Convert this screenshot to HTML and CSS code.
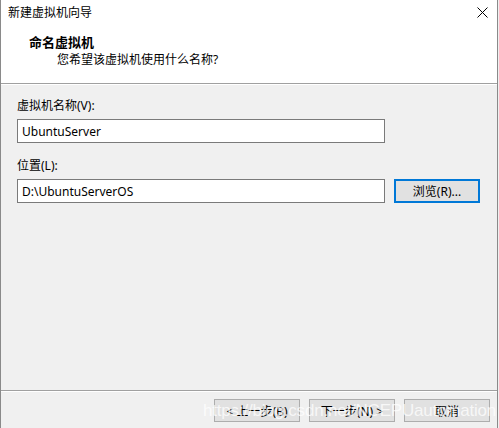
FILE: index.html
```html
<!DOCTYPE html>
<html>
<head>
    <title>新建虚拟机向导</title>
    <meta charset="UTF-8">
    <link rel="stylesheet" href="styles.css">
</head>
<body>
    <div class="window">
        <!-- 顶部白色区域 -->
        <div class="header">
            <div class="title-bar">
                <span class="title">新建虚拟机向导</span>
                <svg class="close" width="11" height="11" viewBox="0 0 11 11">
                    <path d="M0.5 0.5 L10.5 10.5 M10.5 0.5 L0.5 10.5" stroke="#000" stroke-width="1"/>
                </svg>
            </div>
            <div class="heading">命名虚拟机</div>
            <div class="subheading">您希望该虚拟机使用什么名称?</div>
        </div>

        <div class="content">
            <label class="field-label" for="vmname">虚拟机名称(V):</label>
            <div class="row">
                <input type="text" id="vmname" class="text-box" value="UbuntuServer">
            </div>
            <label class="field-label second" for="location">位置(L):</label>
            <div class="row">
                <input type="text" id="location" class="text-box" value="D:\UbuntuServerOS">
                <button class="btn btn-focus">浏览(R)...</button>
            </div>
        </div>

        <div class="footer">
            <button class="btn">&lt; 上一步(B)</button>
            <button class="btn">下一步(N) &gt;</button>
            <button class="btn">取消</button>
            <span class="watermark">https://blog.csdn.net/NCEPUautomation</span>
        </div>
    </div>
</body>
</html>
```

FILE: styles.css
```css
html, body {
    margin: 0;
    padding: 0;
}

body {
    background-color: #f0f0f0;
    font-family: "Noto Sans", "Noto Sans CJK SC", sans-serif;
    font-size: 12px;
    color: #000;
}

.window {
    width: 496px;
    height: 428px;
    border-left: 1px solid #8a8a8a;
    border-right: 1px solid #8a8a8a;
    display: flex;
    flex-direction: column;
    position: relative;
}

.header {
    height: 84px;
    background-color: #fff;
    border-bottom: 1px solid #a0a0a0;
    box-sizing: border-box;
}

.title-bar {
    display: flex;
    justify-content: space-between;
    align-items: center;
    height: 24px;
    padding: 0 9px 0 7px;
}

.title {
    font-size: 12px;
}

.heading {
    margin-top: 10px;
    padding-left: 28px;
    font-weight: bold;
    font-size: 13px;
    line-height: 17px;
}

.subheading {
    padding-left: 56px;
    line-height: 17px;
}

.content {
    flex: 1;
    padding: 12px 0 0 16px;
    border-top: 1px solid #fff;
}

.field-label {
    display: block;
    line-height: 18px;
}

.field-label.second {
    margin-top: 14px;
}

.row {
    display: flex;
    align-items: center;
    gap: 9px;
    margin-top: 4px;
}

.text-box {
    width: 368px;
    height: 24px;
    box-sizing: border-box;
    border: 1px solid #7a7a7a;
    background: #fff;
    padding: 0 4px;
    font-family: inherit;
    font-size: 12px;
    outline: none;
    margin: 0;
}

.btn {
    width: 86px;
    height: 23px;
    box-sizing: border-box;
    border: 1px solid #adadad;
    background-color: #e1e1e1;
    font-family: inherit;
    font-size: 12px;
    color: #000;
    padding: 0;
    margin: 0;
}

.btn-focus {
    height: 24px;
    border: 2px solid #0078d7;
}

.footer {
    height: 38px;
    border-top: 1px solid #a0a0a0;
    box-shadow: inset 0 1px 0 #fff;
    display: flex;
    justify-content: flex-end;
    align-items: flex-start;
    gap: 9px;
    padding: 8px 7px 0 0;
    box-sizing: border-box;
    position: relative;
}

/* 水印 */
.watermark {
    position: absolute;
    left: 202px;
    top: 10px;
    font-family: "Liberation Sans", sans-serif;
    font-size: 17px;
    color: rgba(255, 255, 255, 0.75);
    letter-spacing: -0.2px;
    pointer-events: none;
}
```
